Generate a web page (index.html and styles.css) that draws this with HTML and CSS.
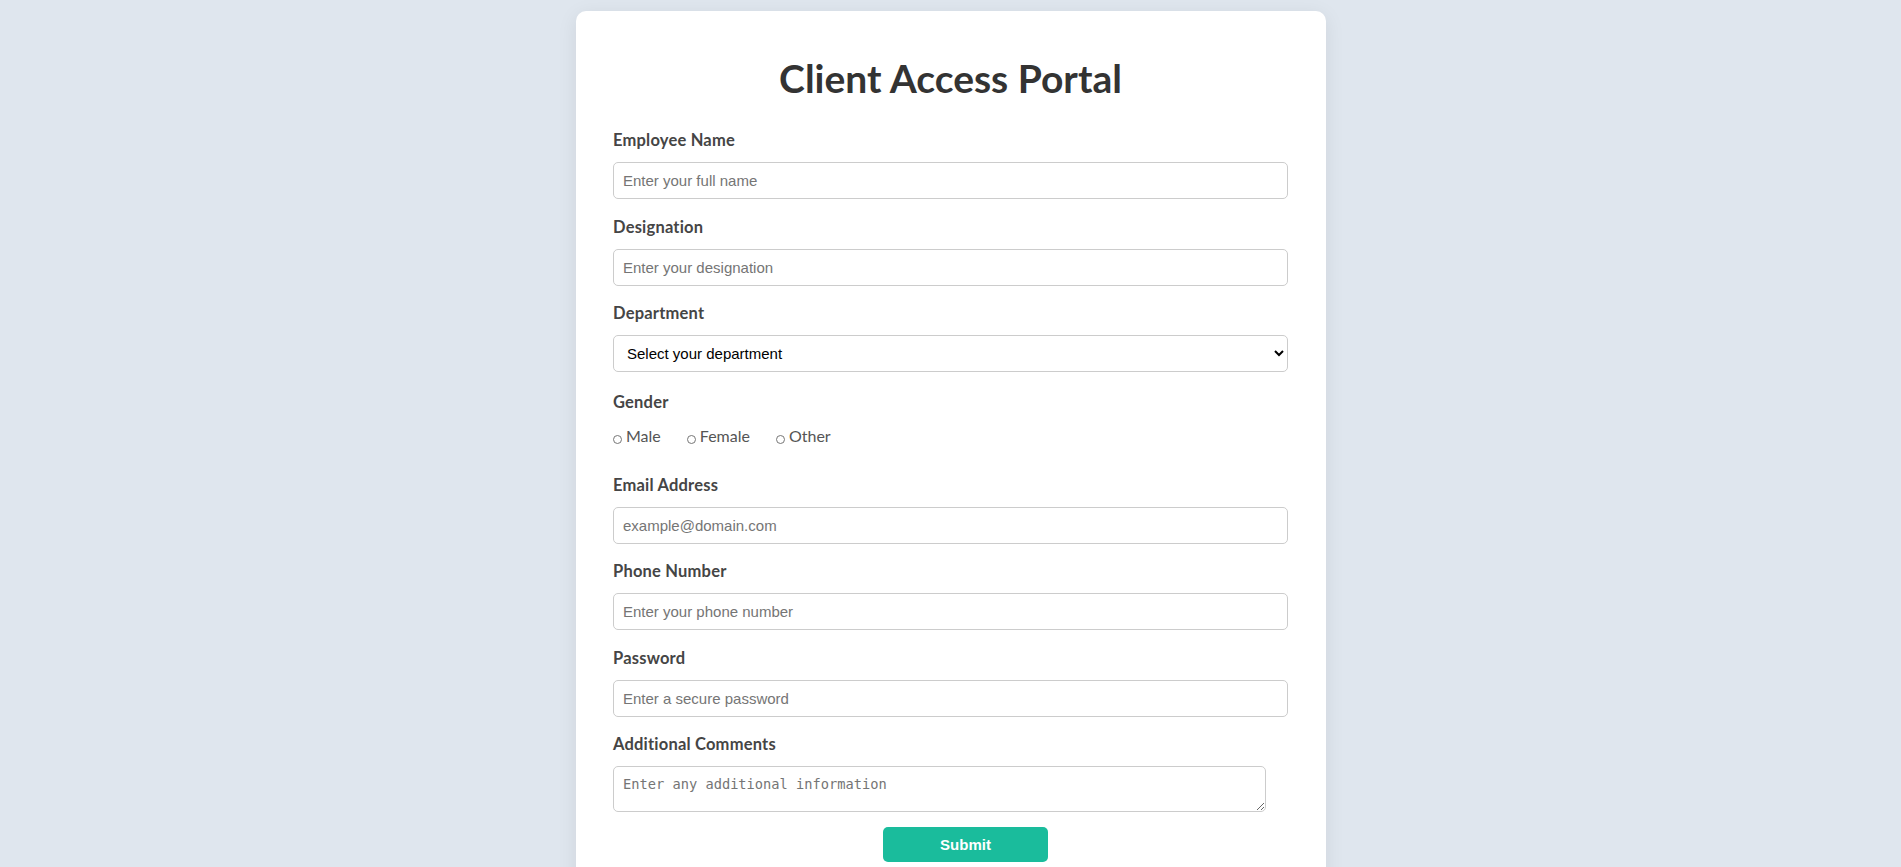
FILE: index.html
```html
<!DOCTYPE html>
<html lang="en">
<head>
<meta charset="UTF-8">
<title>Client Access Portal</title>
<link rel="stylesheet" href="styles.css">
</head>
<body>
<div class="card">
  <h1 class="title">Client Access Portal</h1>
  <form class="form">
    <div class="group">
      <label class="label" for="name">Employee Name</label>
      <input class="field" id="name" type="text" placeholder="Enter your full name">
    </div>
    <div class="group">
      <label class="label" for="designation">Designation</label>
      <input class="field" id="designation" type="text" placeholder="Enter your designation">
    </div>
    <div class="group">
      <label class="label" for="department">Department</label>
      <select class="field select" id="department">
        <option>Select your department</option>
        <option>Engineering</option>
        <option>Marketing</option>
        <option>Sales</option>
        <option>Human Resources</option>
      </select>
    </div>
    <div class="group gender-group">
      <span class="label">Gender</span>
      <div class="radios">
        <label class="radio"><input class="radio-input" type="radio" name="gender">Male</label>
        <label class="radio"><input class="radio-input" type="radio" name="gender">Female</label>
        <label class="radio"><input class="radio-input" type="radio" name="gender">Other</label>
      </div>
    </div>
    <div class="group">
      <label class="label" for="email">Email Address</label>
      <input class="field" id="email" type="email" placeholder="example@domain.com">
    </div>
    <div class="group">
      <label class="label" for="phone">Phone Number</label>
      <input class="field" id="phone" type="tel" placeholder="Enter your phone number">
    </div>
    <div class="group">
      <label class="label" for="password">Password</label>
      <input class="field" id="password" type="password" placeholder="Enter a secure password">
    </div>
    <div class="group last">
      <label class="label" for="comments">Additional Comments</label>
      <textarea class="comments" id="comments" placeholder="Enter any additional information"></textarea>
    </div>
    <button class="submit" type="button">Submit</button>
  </form>
</div>
</body>
</html>
```
FILE: styles.css
```css
html, body {
  margin: 0;
  padding: 0;
}

body {
  background: #dfe6ee;
  font-family: "Lato", "Open Sans", sans-serif;
  color: #444;
}

.card {
  width: 750px;
  box-sizing: border-box;
  margin: 11px auto 0;
  padding: 44px 37.5px 40px;
  background: #ffffff;
  border-radius: 10px;
  box-shadow: 0 4px 20px rgba(0, 0, 0, 0.08);
}

.title {
  margin: 0 0 28px;
  font-size: 39px;
  line-height: 47px;
  font-weight: 700;
  text-align: center;
  color: #333333;
}

.group {
  margin-bottom: 17.5px;
}

.gender-group {
  padding-top: 2px;
}

.group.last {
  margin-bottom: 15px;
}

.label {
  display: block;
  margin-bottom: 12px;
  font-size: 16.5px;
  letter-spacing: 0.2px;
  line-height: 20px;
  font-weight: 700;
  color: #454545;
}

.field {
  display: block;
  width: 100%;
  height: 37px;
  box-sizing: border-box;
  padding: 9px;
  border: 1px solid #cccccc;
  border-radius: 5px;
  background: #ffffff;
  font-family: "Liberation Sans", Arial, sans-serif;
  font-size: 15px;
  color: #000000;
}

.field::placeholder,
.comments::placeholder {
  color: #757575;
}

.select {
  padding: 0 9px;
}

.radios {
  display: flex;
  padding: 2.5px 0 11px;
  font-size: 16px;
  line-height: 20px;
  color: #555555;
}

.radio {
  display: block;
  margin-right: 26px;
}

.radio-input {
  appearance: none;
  -webkit-appearance: none;
  width: 9px;
  height: 9px;
  margin: 0 4px -2px 0;
  border: 1px solid #767676;
  border-radius: 50%;
  background: #ffffff;
  box-sizing: border-box;
}

.comments {
  display: block;
  width: 653px;
  height: 46px;
  box-sizing: border-box;
  padding: 9px;
  border: 1px solid #cccccc;
  border-radius: 5px;
  font-family: "DejaVu Sans Mono", "Liberation Mono", monospace;
  font-size: 13.7px;
  color: #000000;
}

.submit {
  display: block;
  width: 165px;
  height: 35px;
  margin-left: 270px;
  padding: 0;
  border: none;
  border-radius: 5px;
  background: #1abc9c;
  color: #ffffff;
  font-family: "Liberation Sans", Arial, sans-serif;
  font-size: 15px;
  font-weight: 700;
  cursor: pointer;
}
```
